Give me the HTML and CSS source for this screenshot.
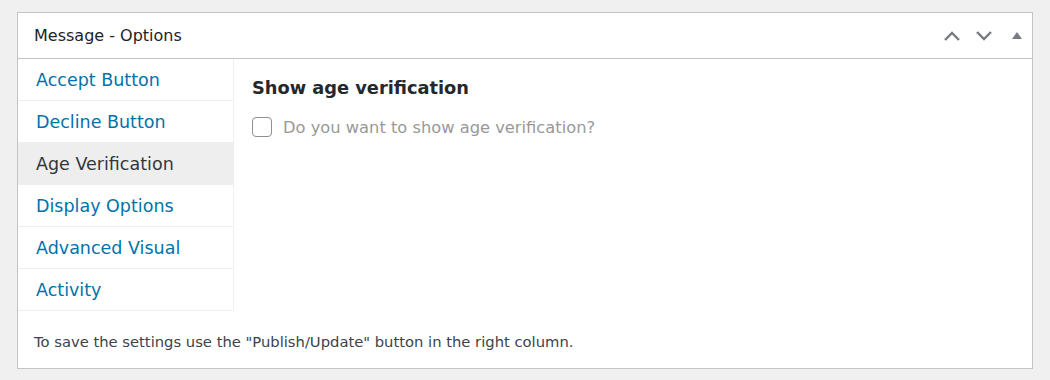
FILE: index.html
```html
<!DOCTYPE html>
<html lang="en">
<head>
<meta charset="utf-8">
<title>Message - Options</title>
<link rel="stylesheet" href="styles.css">
</head>
<body>
<div class="postbox">
  <div class="postbox-header">
    <h2 class="postbox-title">Message - Options</h2>
    <div class="handle-actions">
      <button class="handle-btn" aria-label="Move up">
        <svg width="16" height="10" viewBox="0 0 16 10"><path d="M1 9 L8 2 L15 9" fill="none" stroke="#787c82" stroke-width="2.4"/></svg>
      </button>
      <button class="handle-btn down" aria-label="Move down">
        <svg width="16" height="10" viewBox="0 0 16 10"><path d="M1 1 L8 8 L15 1" fill="none" stroke="#787c82" stroke-width="2.4"/></svg>
      </button>
      <button class="handle-btn toggle" aria-label="Toggle panel">
        <svg width="10" height="7" viewBox="0 0 10 7"><path d="M5 0 L10 7 L0 7 Z" fill="#787c82"/></svg>
      </button>
    </div>
  </div>
  <div class="postbox-body">
    <div class="tabs-layout">
      <ul class="tab-list">
        <li class="tab"><a href="#">Accept Button</a></li>
        <li class="tab"><a href="#">Decline Button</a></li>
        <li class="tab active"><a href="#">Age Verification</a></li>
        <li class="tab"><a href="#">Display Options</a></li>
        <li class="tab"><a href="#">Advanced Visual</a></li>
        <li class="tab"><a href="#">Activity</a></li>
      </ul>
      <div class="tab-panel">
        <h3 class="panel-title">Show age verification</h3>
        <label class="check-row">
          <span class="checkbox"></span>
          <span class="check-label">Do you want to show age verification?</span>
        </label>
      </div>
    </div>
    <p class="footer-note">To save the settings use the "Publish/Update" button in the right column.</p>
  </div>
</div>
</body>
</html>
```

FILE: styles.css
```css
html, body {
  margin: 0;
  padding: 0;
}
body {
  background: #f0f0f1;
  font-family: "DejaVu Sans", sans-serif;
  color: #1d2327;
  padding: 12px 17px 0 17px;
  height: 380px;
  box-sizing: border-box;
}
.postbox {
  width: 1016px;
  height: 357px;
  box-sizing: border-box;
  background: #fff;
  border: 1px solid #c3c4c7;
  display: flex;
  flex-direction: column;
}
.postbox-header {
  height: 45px;
  border-bottom: 1px solid #c3c4c7;
  display: flex;
  align-items: center;
  justify-content: space-between;
  padding: 0 0 0 16px;
  flex-shrink: 0;
}
.postbox-title {
  margin: 0;
  font-size: 16px;
  font-weight: 400;
  color: #1d2327;
}
.handle-actions {
  display: flex;
  align-items: center;
}
.handle-btn {
  border: 0;
  background: none;
  padding: 0;
  width: 32px;
  height: 32px;
  display: flex;
  align-items: center;
  justify-content: center;
}
.handle-btn.down {
  margin-right: 2px;
}
.handle-btn.toggle {
  width: 30px;
}
.postbox-body {
  flex: 1;
  display: flex;
  flex-direction: column;
}
.tabs-layout {
  display: flex;
}
.tab-list {
  list-style: none;
  margin: 0;
  padding: 0;
  width: 215px;
  border-right: 1px solid #f0f0f1;
}
.tab {
  height: 42px;
  border-bottom: 1px solid #eeeeee;
  box-sizing: border-box;
  display: flex;
  align-items: center;
}
.tab a {
  text-decoration: none;
  color: #0073aa;
  font-size: 17.5px;
  padding-left: 18px;
}
.tab.active {
  background: #eeeeee;
  margin-right: -1px;
}
.tab.active a {
  color: #32373c;
}
.tab-panel {
  padding: 18px 18px;
  flex: 1;
}
.panel-title {
  margin: 0 0 19px 0;
  font-size: 17.8px;
  font-weight: 700;
  color: #23282d;
}
.check-row {
  display: flex;
  align-items: center;
  gap: 11px;
}
.checkbox {
  width: 20px;
  height: 20px;
  box-sizing: border-box;
  border: 1px solid #8c8f94;
  border-radius: 4px;
}
.check-label {
  color: #999999;
  font-size: 16.3px;
}
.footer-note {
  margin: auto 0 0 0;
  padding: 0 16px 18px 16px;
  font-size: 14.75px;
  color: #3c434a;
}
```
